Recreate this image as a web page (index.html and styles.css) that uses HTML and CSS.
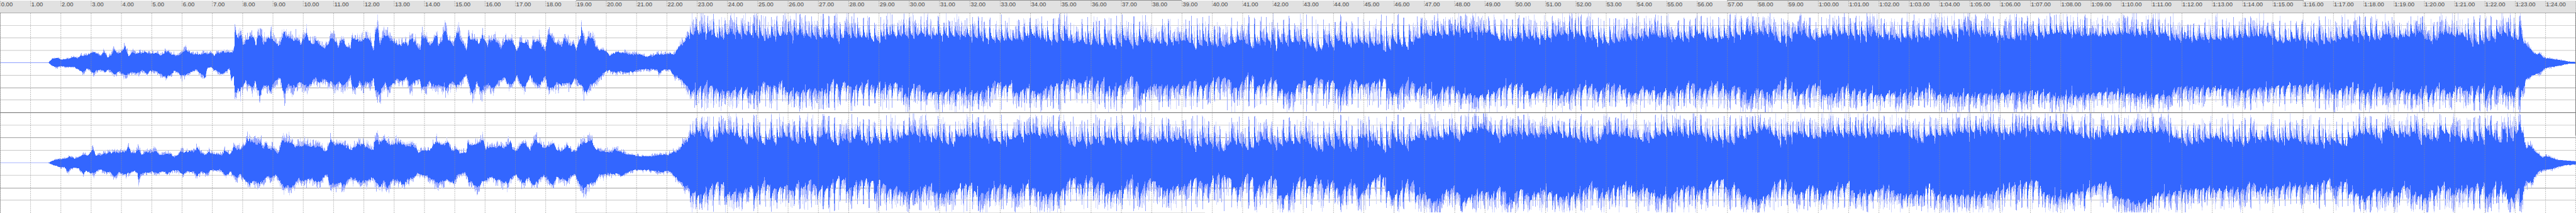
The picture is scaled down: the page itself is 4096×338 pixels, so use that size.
FILE: index.html
```html
<!DOCTYPE html>
<html lang="en">
<head>
<meta charset="utf-8">
<title>Waveform</title>
<link rel="stylesheet" href="styles.css">
</head>
<body>
<main class="editor">
  <header class="ruler" id="ruler"></header>
  <svg class="plot" id="plot" viewBox="0 0 4096 338" preserveAspectRatio="none"></svg>
</main>
<script src="wave.js"></script>
</body>
</html>
```
FILE: styles.css
```css
html, body { margin: 0; padding: 0; background: #fff; }
.editor {
  display: grid;
  width: 4096px;
  height: 338px;
  overflow: hidden;
  grid-template: 20px 318px / 4096px;
}
.ruler {
  grid-area: 1 / 1;
  display: flex;
  overflow: hidden;
  background: #e1e1e1;
}
.cell {
  flex: 0 0 48.181px;
  box-sizing: border-box;
  padding: 1px 0 0 1.7px;
  font: 9.5px/11px "Liberation Sans", Arial, sans-serif;
  color: #484848;
  white-space: nowrap;
}
.plot {
  grid-area: 1 / 1 / 3 / 2;
  display: block;
  width: 4096px;
  height: 338px;
  z-index: 1;
}
.pale { fill: #d0d7ff; }
.mid { fill: #98a8ff; }
.body { fill: #3366ff; }
.wave { shape-rendering: crispEdges; }
.tick { stroke: #8e8e8e; stroke-opacity: .6; stroke-width: 1; stroke-dasharray: 2 1.28; }
.edge { stroke: #777; stroke-width: 1; }
```
FILE: wave.js
```js
// Source units are 5000 x 412; the plot is drawn in window pixels.
const SX = 4096 / 5000, SY = 338 / 412, W = 4096;
const SECOND = 58.815;

let seed = 20417;
const rnd = () => {
  seed = (seed * 1664525 + 1013904223) >>> 0;
  return seed / 4294967296;
};

const parse = s => s.trim().split(/[\s,]+/).map(p => p.split(':').map(Number));
const at = (pts, x) => {
  if (x <= pts[0][0]) return pts[0][1];
  let lo = 0, hi = pts.length - 1;
  if (x >= pts[hi][0]) return pts[hi][1];
  while (hi - lo > 1) {
    const m = (lo + hi) >> 1;
    if (pts[m][0] <= x) lo = m; else hi = m;
  }
  const a = pts[lo], b = pts[hi];
  return a[1] + (b[1] - a[1]) * (x - a[0]) / (b[0] - a[0]);
};

const intro = [
  `93:0 96:3 102:8 112:9 118:5 125:7 135:8 145:11 150:8 155:12 162:14 170:14 177:18 182:19 188:17 195:13 201:19 208:10 216:15 222:25 228:15 235:20 243:30 249:12 256:19 265:17 275:18 283:20 292:16 302:20 310:14 318:17 325:23 332:16 340:13 350:16 360:24 370:17 380:15 390:16 400:16 410:18 415:13 422:20 428:19 437:20 447:19 451:18 454:25 455:50 456.5:62 458:50 462:45 467:50 471:33 478:40 485:48 491:50 496:34 500:50 507:50 511:32 517:46 521:44 524:50 525:68 527:50 533:42 540:30 545:38 551:57 556:52 562:45 570:42 577:43 584:33 588:46 595:50 600:42 607:32 613:42 620:34 630:25 636:36 642:46 650:42 656:28 661:40 667:42 672:30 680:28 682:46 690:42 697:42 706:46 714:44 720:34 725:22 727:50 732:62 737:33 742:50 750:50 757:44 766:40 772:32 779:36 785:37 791:33 797:46 802:40 808:34 815:23 818:50 824:48 830:36 836:34 842:46 848:50 850:32 856:40 863:60 869:40 875:42 880:34 888:60 893:44 899:34 905:22 908:46 916:45 925:43 929:34 935:48 942:42 946:30 950:40 960:42 967:34 972:26 980:42 990:40 997:38 1003:22 1008:38 1020:40 1028:26 1032:26 1034:42 1040:38 1047:40 1052:30 1058:22 1063:48 1070:46 1075:40 1083:35 1090:30 1096:48 1103:36 1109:30 1113:40 1118:22 1122:38 1126:42 1128:60 1131:52 1133:38 1137:32 1141:48 1151:48 1155:28 1162:25 1168:24 1175:22 1184:12 1190:18 1200:20 1210:19 1220:16 1230:15 1240:16 1250:12 1265:12 1272:15 1280:16 1290:15 1300:18 1307:14 1313:24 1320:34 1326:36 1332:44 1338:50`,
  `93:0 100:5 108:8 120:6 130:8 135:8 145:9 155:14 162:17 168:10 175:13 180:20 188:14 195:13 203:18 210:12 222:22 230:16 243:22 257:18 265:20 275:14 285:20 292:15 300:14 308:20 317:26 323:28 330:22 340:14 352:25 365:20 380:12 392:22 397:28 402:10 410:8 415:14 420:14 428:20 434:18 440:15 445:10 448:30 453:25 455:52 462:50 468:45 475:36 483:40 491:48 495:34 500:48 504:60 508:45 515:40 525:50 530:38 543:26 547:45 552:60 558:42 570:46 580:38 590:38 597:46 605:35 613:28 618:40 629:30 637:36 645:40 650:40 660:38 667:44 672:36 680:26 683:50 690:48 697:38 705:46 711:38 718:36 725:28 727:50 735:56 742:45 747:38 752:54 762:40 770:30 780:36 788:28 795:46 803:34 815:30 818:50 825:46 833:35 840:46 848:42 855:48 862:40 865:58 870:40 880:38 885:42 895:36 905:20 910:40 916:58 925:36 933:54 945:40 955:46 965:38 977:25 987:40 1000:30 1003:22 1010:38 1017:46 1029:25 1036:40 1045:42 1055:30 1058:25 1062:46 1070:48 1080:40 1090:38 1100:40 1110:38 1116:30 1120:34 1130:46 1138:55 1145:38 1152:38 1160:30 1170:20 1180:14 1190:17 1205:16 1220:18 1235:15 1250:12 1265:12 1275:12 1278:22 1285:14 1300:14 1307:22 1315:28 1320:32 1327:40 1335:45 1340:54`,
  `93:0 105:5 115:7 128:8 135:12 145:8 155:12 161:16 170:13 181:26 185:12 195:15 205:18 215:20 225:20 235:20 243:22 249:30 254:18 262:18 268:27 275:16 285:20 295:22 302:22 310:14 320:16 330:16 338:11 345:14 350:20 360:20 370:22 376:20 383:28 390:18 397:14 405:20 415:16 425:16 430:15 437:25 445:15 449:20 453:33 459:25 465:25 473:32 480:40 488:42 495:35 505:38 511:26 515:38 521:25 530:28 540:16 547:42 555:40 562:38 570:33 580:28 590:36 600:32 615:32 625:28 633:20 640:40 650:34 660:36 670:32 680:24 690:34 705:34 715:24 724:24 727:45 735:34 742:40 750:42 757:30 765:36 775:38 785:34 800:34 807:26 812:18 822:22 835:24 842:36 855:34 870:36 878:22 885:26 892:18 905:20 907:36 920:34 935:42 942:26 950:30 960:30 970:32 977:28 985:34 990:38 996:22 1003:22 1010:34 1020:34 1028:24 1037:40 1047:36 1055:28 1065:30 1073:36 1080:26 1090:20 1100:32 1110:22 1118:22 1124:34 1133:38 1140:38 1148:44 1153:28 1165:22 1180:20 1193:24 1203:22 1215:16 1230:14 1240:12 1255:12 1270:14 1285:15 1295:14 1310:20 1318:24 1325:36 1333:42 1338:48`,
  `93:0 105:5 118:8 125:8 131:18 137:10 145:8 152:10 161:20 167:15 175:18 183:20 190:14 200:14 207:18 215:18 223:26 230:16 240:22 250:20 260:15 266:18 268:33 273:20 285:18 295:16 305:20 315:16 325:20 335:14 345:14 355:20 365:16 375:17 382:26 390:15 400:20 410:14 425:12 430:14 437:26 447:15 453:24 460:28 466:20 473:30 485:40 492:34 500:38 508:36 518:25 525:28 535:22 545:38 553:45 564:45 573:40 580:28 590:36 605:28 615:38 625:30 634:20 638:38 650:42 660:36 665:42 680:28 700:36 712:34 724:28 735:48 745:32 751:50 760:34 770:32 782:42 793:30 800:28 812:20 825:25 840:32 850:38 865:34 880:38 887:22 903:18 910:36 927:42 937:36 953:26 965:34 985:36 1000:20 1013:38 1025:28 1037:40 1055:24 1065:34 1071:42 1080:28 1100:32 1115:20 1123:36 1133:48 1145:36 1155:38 1162:24 1180:20 1200:20 1206:24 1220:16 1240:12 1260:14 1280:16 1300:16 1310:26 1320:36 1330:44 1337:48`
].map(parse);

const loud = [
  `1340:52 1372:54 1395:42 1415:54 1480:50 1486:30 1492:48 1530:52 1622:46 1628:33 1640:52 1690:44 1708:38 1715:50 1755:50 1800:50 1850:52 1900:46 1950:40 1965:44 1985:42 1998:54 2030:42 2052:38 2075:48 2083:34 2100:40 2117:26 2122:44 2138:27 2143:42 2160:30 2185:42 2205:26 2215:42 2240:36 2280:38 2305:40 2320:26 2340:38 2363:27 2385:32 2410:42 2430:25 2450:40 2475:40 2477:14 2480:38 2500:36 2530:40 2555:22 2565:22 2570:38 2587:26 2593:42 2620:30 2640:38 2683:32 2684:20 2699:24 2701:42 2730:28 2745:42 2760:50 2800:52 2840:56 2880:56 2895:52 2920:38 2960:48 3000:44 3040:54 3100:44 3122:36 3170:44 3200:50 3260:42 3300:50 3330:42 3400:56 3440:54 3450:42 3456:30 3464:54 3468:18 3470:46 3477:46 3479:18 3482:56 3520:44 3560:54 3600:50 3640:50 3690:46 3733:46 3736:22 3739:48 3820:58 3860:48 3900:44 4000:56 4060:48 4120:54 4200:52 4240:40 4300:44 4400:50 4430:36 4450:44 4490:36 4530:40 4560:48 4600:50 4615:38 4630:54 4645:44 4700:56 4702:20 4705:42 4731:38 4740:54 4790:48 4798:34 4830:40 4843:44 4850:54 4868:56 4876:46 4885:40 4893:56 4900:34 4912:24 4918:16 4930:17 4936:9 4950:7 4970:5 4985:2 5000:1`,
  `1340:54 1372:40 1400:50 1425:52 1470:50 1486:26 1492:46 1520:28 1524:54 1600:46 1622:30 1628:50 1640:28 1650:48 1690:36 1700:50 1709:22 1712:48 1735:34 1760:58 1780:40 1800:56 1850:54 1900:56 1935:32 1950:44 1962:34 1970:58 1995:44 2010:56 2030:44 2050:38 2083:28 2100:40 2112:24 2119:22 2125:42 2138:28 2148:50 2180:40 2195:24 2205:28 2213:56 2240:40 2270:44 2300:44 2317:26 2325:44 2345:38 2363:27 2385:30 2400:52 2420:24 2430:14 2437:44 2450:40 2475:28 2480:48 2505:54 2520:38 2530:32 2545:44 2558:20 2570:40 2587:28 2600:60 2620:36 2630:30 2640:40 2683:34 2684:16 2700:60 2730:34 2740:28 2746:56 2765:40 2790:64 2800:48 2820:42 2835:56 2880:62 2893:58 2920:42 2950:38 2970:60 3000:42 3030:62 3060:46 3090:42 3105:54 3120:36 3150:50 3175:58 3190:46 3220:56 3270:48 3279:30 3300:56 3334:34 3340:52 3347:32 3352:56 3366:38 3395:64 3410:46 3435:58 3445:46 3456:30 3462:50 3465:18 3470:46 3476:48 3479:20 3484:64 3500:52 3526:36 3540:60 3560:60 3587:34 3589:50 3640:60 3690:56 3733:54 3736:14 3740:56 3748:28 3754:60 3850:58 3900:56 3940:52 4000:62 4100:54 4210:62 4222:44 4290:46 4350:50 4440:42 4500:40 4530:54 4560:44 4600:56 4615:34 4625:58 4650:48 4690:60 4708:34 4713:72 4724:42 4760:60 4769:36 4785:54 4796:32 4803:62 4812:30 4818:46 4822:40 4825:66 4840:38 4865:58 4870:44 4877:62 4885:38 4890:54 4898:52 4903:32 4915:24 4928:20 4940:10 4955:7 4970:5 4985:2 5000:1`,
  `1340:50 1360:58 1380:36 1395:52 1420:56 1448:36 1460:50 1485:32 1495:48 1505:34 1520:52 1552:32 1565:56 1582:28 1590:46 1600:54 1627:28 1640:46 1648:34 1665:50 1690:28 1697:50 1710:34 1722:48 1726:36 1760:52 1800:50 1850:32 1855:50 1900:46 1950:38 1965:46 2000:52 2030:50 2070:48 2083:26 2100:44 2112:27 2130:46 2140:28 2150:46 2185:34 2210:44 2230:36 2300:46 2320:24 2340:36 2363:26 2376:18 2390:44 2427:24 2450:44 2475:32 2477:16 2484:34 2500:38 2530:42 2555:24 2565:18 2572:40 2585:20 2592:48 2620:24 2632:20 2640:48 2683:32 2684:20 2699:26 2701:52 2715:38 2731:22 2745:48 2795:46 2820:58 2824:36 2850:58 2880:66 2910:44 2940:54 2990:48 3025:58 3040:48 3100:38 3103:26 3110:56 3160:46 3200:42 3240:58 3300:50 3340:42 3366:34 3380:54 3389:38 3400:60 3430:62 3450:46 3456:32 3463:50 3468:18 3470:50 3477:46 3479:18 3482:56 3526:44 3540:58 3600:50 3690:56 3736:34 3740:50 3850:60 3900:54 4000:60 4060:46 4120:56 4200:58 4240:34 4300:46 4362:32 4368:46 4430:38 4450:44 4490:30 4530:42 4550:26 4560:44 4600:58 4615:38 4630:58 4680:50 4690:60 4701:18 4705:50 4731:34 4736:62 4790:40 4798:34 4805:54 4821:34 4826:60 4851:28 4860:60 4875:44 4890:60 4897:52 4903:28 4910:34 4916:27 4920:22 4926:16 4933:11 4945:12 4960:6 4980:4 5000:3`,
  `1340:56 1360:62 1380:44 1400:30 1410:60 1440:52 1457:36 1465:60 1486:28 1495:50 1515:44 1530:36 1535:54 1553:24 1557:48 1576:26 1585:52 1605:48 1622:28 1640:26 1645:52 1660:36 1690:24 1700:52 1709:24 1720:50 1740:46 1765:56 1807:38 1815:58 1850:52 1888:38 1895:60 1935:44 1950:38 1962:46 1970:60 1990:36 2020:56 2030:60 2058:52 2080:24 2100:44 2112:18 2119:20 2125:46 2138:26 2148:56 2180:48 2195:24 2213:56 2230:28 2260:48 2300:42 2320:28 2345:40 2363:22 2385:24 2400:54 2420:20 2430:18 2437:52 2450:40 2475:18 2480:56 2500:62 2518:36 2530:26 2545:48 2558:16 2570:48 2587:26 2600:58 2615:42 2630:24 2637:64 2660:36 2684:18 2700:64 2715:58 2735:26 2744:28 2747:64 2768:50 2770:66 2790:76 2800:54 2825:38 2835:78 2860:58 2880:52 2893:60 2915:42 2925:70 2950:46 2970:64 2990:48 3030:64 3060:60 3090:36 3105:58 3160:36 3175:58 3190:42 3220:62 3250:56 3279:38 3300:52 3334:32 3347:26 3352:52 3366:38 3385:60 3410:68 3430:62 3440:44 3456:30 3462:48 3465:18 3470:50 3476:48 3479:18 3484:60 3526:36 3530:62 3587:34 3600:58 3660:46 3690:60 3733:58 3736:14 3740:56 3748:28 3754:60 3850:60 3960:28 3962:58 4000:64 4096:32 4100:62 4175:76 4180:58 4210:58 4260:46 4300:48 4350:50 4374:28 4380:50 4440:42 4500:40 4523:24 4527:50 4550:26 4560:54 4600:64 4608:40 4625:60 4640:50 4655:64 4665:34 4680:56 4711:68 4718:44 4727:60 4740:38 4765:60 4769:36 4775:52 4796:44 4809:36 4815:50 4822:36 4827:64 4844:28 4850:64 4856:28 4868:66 4877:66 4886:42 4893:70 4902:34 4914:38 4922:20 4928:15 4940:13 4952:12 4965:7 4980:4 5000:3`
].map(parse);

// Drum hits, common to both channels.
const beats = [];
[[1339, 1440.3, 9], [1440.3, 1954.2, 46], [1954.2, 2512.7, 50], [2512.7, 4612.3, 189], [4612.3, 4890, 25]].forEach(([a, b, n]) => {
  for (let i = 0; i < n; i++) beats.push({ x: a + (b - a) * i / n, s: rnd() < .15 ? .4 : .65 + rnd() * .35 });
});
beats.push({ x: 4890.5, s: .97 });

function envelope(k) {
  const mid = [], pale = [], body = [];
  let n1 = 0, n2 = 0, drift = 0, bi = 0;
  for (let px = 0; px < W; px++) {
    const x = px / SX;
    if (px % 2 === 0 || rnd() < .3) n1 = rnd();
    if (rnd() < .72) n2 = rnd();
    drift = drift * .65 + (rnd() - .5) * .6;
    if (x < 93) { body.push(0); mid.push(0); pale.push(0); continue; }
    const isLoud = x > 1339 && x < 4893;
    const base = x < 1339 ? at(intro[k], x) : at(loud[k], x);
    // Narrow gaps between control points are partly filled by neighbouring peaks.
    const near = isLoud ? Math.max(base, (at(loud[k], x - 9) + at(loud[k], x + 9)) / 2 - 6) : base;
    const core = isLoud ? base * .45 + near * .55 : base;
    let b = core * (1.03 + drift * .16 + (n1 - .5) * .14);
    let m = b + base * .34 * n2 * n2, p = m + base * .24 * rnd() * rnd();
    if (!isLoud) {
      if (rnd() < .09) p = m = b + base * .45 * rnd();
    } else {
      b = core * (1.02 + drift * .26 + (n1 - .5) * .2);
      if (rnd() < .05) b *= .8;
      if (rnd() < .07) b += 18 * rnd();
      m = b + 32 * Math.pow(n2, 2.1);
      p = m + 24 * Math.pow(rnd(), 2);
      while (bi < beats.length - 1 && beats[bi + 1].x <= x + .6) bi++;
      const d = x - beats[bi].x;
      if (d > -.7 && d < 8) {
        const f = beats[bi].s * Math.exp(-Math.max(0, d) / 2.3);
        b = Math.max(b, core + (93 - core) * f * (.6 + rnd() * .22));
        const j = beats[bi].s * (d < 1.2 ? 1 : Math.exp(-d / 2));
        m = Math.max(m, b, core + (96 - core) * j * (.85 + rnd() * .15));
        p = Math.max(p, m);
      }
      if (rnd() < .035) { p = Math.max(p, 72 + rnd() * 22); if (rnd() < .55) m = p; }
    }
    const cap = 96;
    body.push(Math.min(cap, b)); mid.push(Math.min(cap, m)); pale.push(Math.min(cap, p));
  }
  return { body, mid, pale };
}

function area(up, down, cy) {
  let d = '';
  for (let x = 76; x < W; x++) {
    const t = Math.round((cy - up[x]) * SY), b = Math.round((cy + down[x]) * SY);
    if (b > t) d += `M${x} ${t}h1V${b}h-1z`;
  }
  return d;
}

let out = '';
const rect = (x, y, w, h, c) => { out += `<rect x="${x}" y="${y}" width="${w}" height="${h}" fill="${c}"/>`; };

// Ruler borders and level lines.
rect(0, 0, W, 1, '#fff');
rect(916, 0, 963, 1, '#929292');
rect(2746, 0, 917, 1, '#929292');
rect(0, 20, W, 1, '#adadad');
[[40, '#d2d2d2'], [59.5, '#c4c4c4'], [79.5, '#c8c8c8'], [119, '#c8c8c8'], [139, '#a6a6a6'], [158, '#c6c6c6'],
 [198, '#d2d2d2'], [218, '#a0a0a0'], [238, '#c8c8c8'], [277.7, '#cccccc'], [298, '#a0a0a0'], [317, '#c6c6c6']]
  .forEach(([y, c]) => rect(0, y, W, 1, c));
rect(916, 337, 1000, 1, '#e2e2e2');

// Silence line before the first sound.
rect(0, 99, 78, 1, '#8f9fff');
rect(0, 257.7, 78, 1, '#aab5ff');

[[121.3, 0], [315, 2]].forEach(([cy, k]) => {
  const up = envelope(k), down = envelope(k + 1);
  out += '<g class="wave">';
  ['pale', 'mid', 'body'].forEach(t => { out += `<path class="${t}" d="${area(up[t], down[t], cy)}"/>`; });
  out += '</g>';
});
rect(0, 178, W, 1, '#858585');
rect(0, 179, W, 1, '#dedede');

// Second marks.
for (let s = 0; s <= 84; s++) {
  const x = s * SECOND * SX + .4;
  out += `<line class="tick" x1="${x}" x2="${x}" y1="1.5" y2="10"/><line class="tick" x1="${x}" x2="${x}" y1="21" y2="338"/>`;
}
out += '<line class="edge" x1="0" x2="0" y1="20" y2="338"/><line class="edge" x1="4095.5" x2="4095.5" y1="20" y2="215"/><line class="tick" x1="4095.5" x2="4095.5" y1="2" y2="338"/>';
document.getElementById('plot').innerHTML = out;

let cells = '';
for (let s = 0; s <= 84; s++) {
  const m = Math.floor(s / 60), r = s % 60;
  cells += `<span class="cell">${m ? m + ':' + String(r).padStart(2, '0') : r}.00</span>`;
}
document.getElementById('ruler').innerHTML = cells;
```
